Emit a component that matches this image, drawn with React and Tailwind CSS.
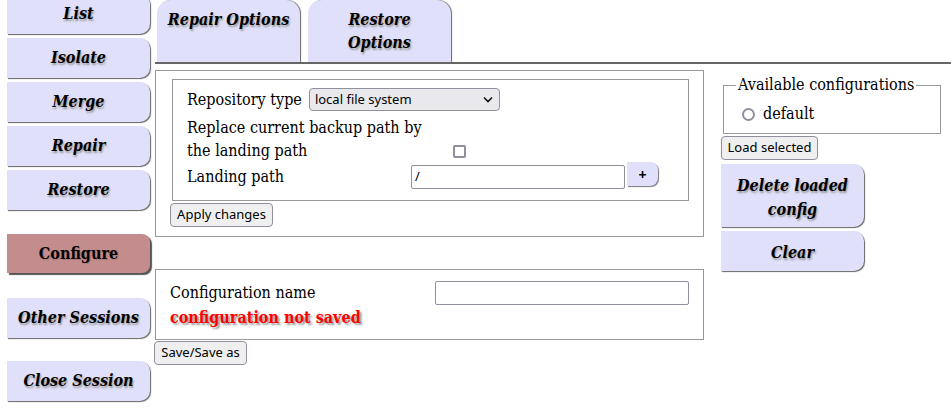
import React from "react";

const serif = { fontFamily: "'DejaVu Serif Condensed', 'DejaVu Serif', serif" };
const sans = { fontFamily: "'Noto Sans', 'Open Sans', sans-serif" };

function NavBtn({ children, className = "" }) {
  return (
    <div
      style={serif}
      className={
        "flex items-center justify-center w-[143px] h-[40px] bg-[#e0e0fb] rounded-r-[10px] shadow-[1px_1px_1px_#666] text-[16px] font-bold italic text-black [text-shadow:1px_2px_2px_#999] " +
        className
      }
    >
      {children}
    </div>
  );
}

function SmallBtn({ children, className = "" }) {
  return (
    <div
      style={sans}
      className={
        "inline-flex items-center justify-center h-[24px] px-[5px] bg-[#efefef] border border-[#8f8f9d] rounded-[4px] text-[13px] text-black " +
        className
      }
    >
      {children}
    </div>
  );
}

export default function App() {
  return (
    <div className="w-[951px] h-[409px] bg-white flex overflow-hidden relative">
      {/* Left nav */}
      <div className="w-[155px] shrink-0 pl-[7px] flex flex-col mt-[-6px]">
        <div className="flex flex-col gap-[4px]">
          <NavBtn>List</NavBtn>
          <NavBtn>Isolate</NavBtn>
          <NavBtn>Merge</NavBtn>
          <NavBtn>Repair</NavBtn>
          <NavBtn>Restore</NavBtn>
        </div>
        <div
          style={serif}
          className="mt-[24px] flex items-center justify-center w-[143px] h-[39px] bg-[#c48d8d] rounded-r-[8px] shadow-[2px_2px_1px_#555] text-[16px] font-bold text-black [text-shadow:1px_1px_1px_#a77]"
        >
          Configure
        </div>
        <NavBtn className="mt-[25px]">Other Sessions</NavBtn>
        <NavBtn className="mt-[23px]">Close Session</NavBtn>
      </div>

      {/* Main */}
      <div className="flex-1 flex flex-col">
        {/* tabs */}
        <div className="flex gap-[8px] pl-[2px] h-[64px] border-b-2 border-[#666]">
          <div
            style={serif}
            className="w-[143px] h-[62px] bg-[#e0e0fb] rounded-t-[14px] shadow-[1px_0_1px_#666] text-[16px] font-bold italic text-center pt-[8px] leading-[23px] [text-shadow:1px_2px_2px_#999]"
          >
            Repair Options
          </div>
          <div
            style={serif}
            className="w-[143px] h-[62px] bg-[#e0e0fb] rounded-t-[14px] shadow-[1px_0_1px_#666] text-[16px] font-bold italic text-center pt-[8px] leading-[23px] [text-shadow:1px_2px_2px_#999]"
          >
            Restore
            <br />
            Options
          </div>
        </div>

        <div className="flex">
          {/* center column */}
          <div className="w-[549px] flex flex-col">
            <div className="mt-[6px] h-[167px] border border-[#999] pl-[16px] pt-[8px]">
              <div
                style={serif}
                className="w-[517px] h-[122px] border border-[#999] pl-[14px] pt-[7px] text-[16px] text-black"
              >
                <div className="flex items-center h-[25px]">
                  <span>Repository type</span>
                  <div
                    style={sans}
                    className="ml-[7px] w-[191px] h-[23px] bg-[#e9e9ed] border border-[#8f8f9d] rounded-[4px] flex items-center justify-between pl-[5px] pr-[6px] text-[13px]"
                  >
                    <span>local file system</span>
                    <svg width="10" height="7" viewBox="0 0 10 7">
                      <path d="M1 1.5 L5 5.5 L9 1.5" fill="none" stroke="#111" strokeWidth="1.6" />
                    </svg>
                  </div>
                </div>
                <div className="leading-[23px] mt-[4px]">Replace current backup path by</div>
                <div className="flex items-center leading-[23px]">
                  <span>the landing path</span>
                  <div className="ml-[146px] mt-[2px] w-[13px] h-[13px] border-2 border-[#8f8f9d] rounded-[2px] bg-white" />
                </div>
                <div className="flex items-center mt-[2px]">
                  <span className="w-[224px] pt-[1px]">Landing path</span>
                  <div
                    style={sans}
                    className="w-[214px] h-[24px] border border-[#8f8f9d] rounded-[2px] flex items-center pl-[3px] text-[13px]"
                  >
                    /
                  </div>
                  <div
                    style={sans}
                    className="ml-[2px] mt-[-5px] w-[31px] h-[24px] bg-[#e0e0fb] rounded-r-[8px] shadow-[1px_1px_1px_#777] flex items-center justify-center text-[14px] font-bold"
                  >
                    +
                  </div>
                </div>
              </div>
              <SmallBtn className="mt-[2px] ml-[-2px] w-[103px]">Apply changes</SmallBtn>
            </div>

            <div
              style={serif}
              className="mt-[32px] h-[71px] border border-[#999] pl-[14px] pt-[11px] text-[16px]"
            >
              <div className="flex items-center">
                <span className="w-[265px]">Configuration name</span>
                <div className="w-[254px] h-[24px] border border-[#8f8f9d] rounded-[2px]" />
              </div>
              <div className="mt-[2px] text-[#ff0000] font-bold text-[16px] leading-[22px] [text-shadow:2px_2px_2px_#999]">
                configuration not saved
              </div>
            </div>
            <SmallBtn className="mt-[1px] ml-[-1px] w-[93px]">Save/Save as</SmallBtn>
          </div>

          {/* right column */}
          <div className="ml-[17px] flex flex-col">
            <fieldset
              style={serif}
              className="mt-[12px] ml-[2px] w-[218px] h-[58px] border border-[#999] pl-[18px] text-[16px]"
            >
              <legend className="px-[2px] ml-[-6px] leading-[18px]">Available configurations</legend>
              <div className="flex items-center mt-[8px]">
                <div className="w-[13px] h-[13px] rounded-full border-2 border-[#8f8f9d] bg-white" />
                <span className="ml-[8px]">default</span>
              </div>
            </fieldset>
            <SmallBtn className="mt-[2px] w-[97px]">Load selected</SmallBtn>
            <NavBtn className="mt-[4px] h-[63px] leading-[24px] text-center pt-[4px]">
              Delete loaded
              <br />
              config
            </NavBtn>
            <NavBtn className="mt-[4px] pt-[3px]">Clear</NavBtn>
          </div>
        </div>
      </div>
    </div>
  );
}
